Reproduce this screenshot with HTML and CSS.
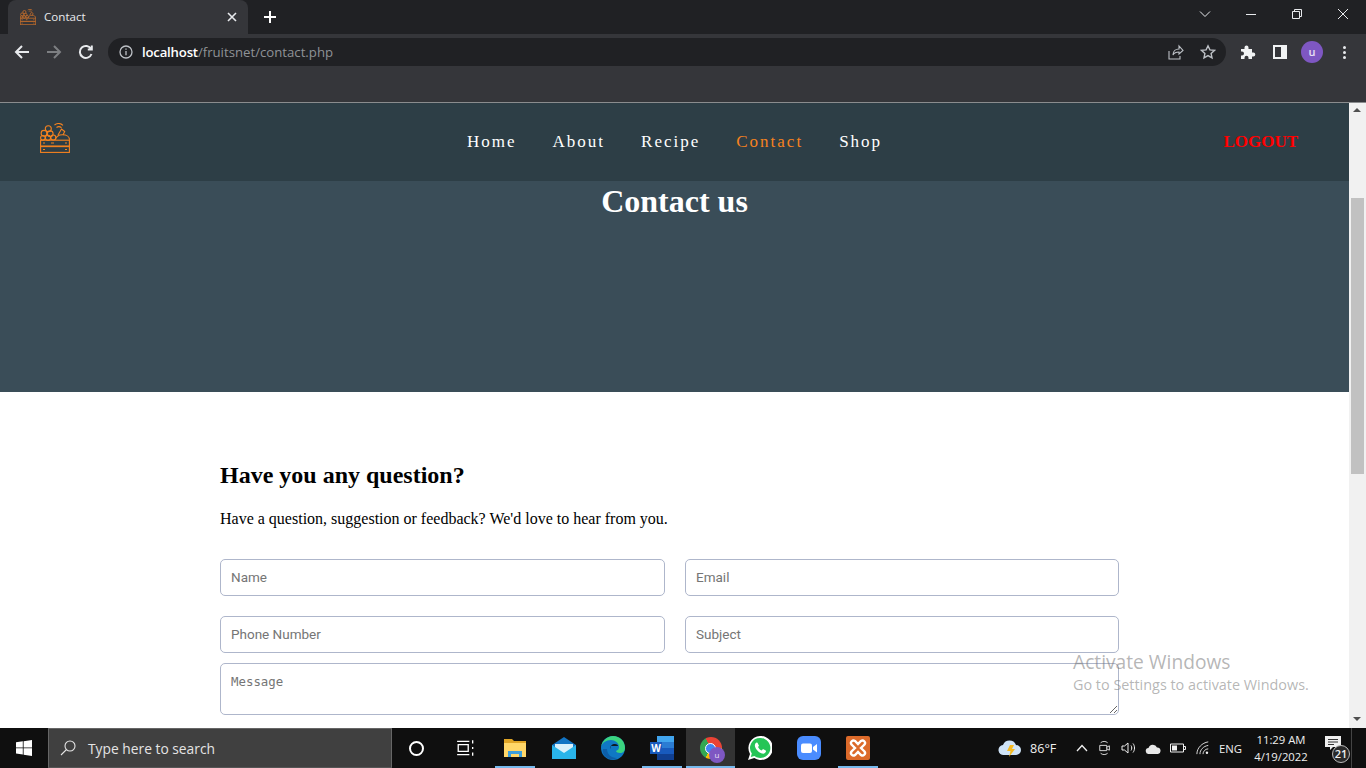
FILE: index.html
```html
<!DOCTYPE html>
<html lang="en">
<head>
<meta charset="utf-8">
<title>Contact</title>
<link rel="stylesheet" href="styles.css">
</head>
<body>
<svg class="defs" width="0" height="0" aria-hidden="true">
  <symbol id="crate" viewBox="0 0 30 30">
    <g fill="none" stroke="currentColor">
      <rect x="0.6" y="17.2" width="28.8" height="5.8"/>
      <rect x="0.6" y="23.6" width="28.8" height="5.8"/>
      <path d="M3 20h2M11 20h3M25 20h2M3 26.5h2M25 26.5h2"/>
      <circle cx="8.300" cy="5.800" r="3"/>
      <circle cx="4" cy="10.300" r="2.900"/>
      <circle cx="10.200" cy="10.800" r="2.900"/>
      <circle cx="2.900" cy="14.800" r="2.300"/>
      <circle cx="8" cy="14.800" r="2.600"/>
      <circle cx="13.300" cy="14.500" r="2.500"/>
      <path d="M15.500 16.800c0-3 3-5 7-5s7 2 7 5"/>
      <path d="M18 12l3.500-6 3.200 2.500-1.700 3.500"/>
      <path d="M14.500 2c2.500-1.800 6-1.800 8.500.3M16.500 4.500c1.500-1 3.500-1 5 .2"/>
    </g>
  </symbol>
</svg>

<header class="chrome">
  <div class="tabstrip">
    <div class="tab">
      <svg class="tab-icon"><use href="#crate"/></svg>
      <span class="tab-title">Contact</span>
      <svg class="tab-close" viewBox="0 0 10 10"><path d="M1 1l8 8M9 1l-8 8"/></svg>
    </div>
    <svg class="new-tab" viewBox="0 0 12 12"><path d="M6 0v12M0 6h12"/></svg>
    <div class="win-controls">
      <svg class="win-ico" viewBox="0 0 12 12"><path d="M1 3.500l5 5 5-5"/></svg>
      <svg class="win-ico" viewBox="0 0 12 12"><path d="M1 6.500h10"/></svg>
      <svg class="win-ico" viewBox="0 0 12 12"><path d="M1.500 3.500h7v7h-7zM3.500 3.500v-2h7v7h-2"/></svg>
      <svg class="win-ico" viewBox="0 0 12 12"><path d="M1 1l10 10M11 1l-10 10"/></svg>
    </div>
  </div>
  <div class="toolbar">
    <svg class="nav-ico" viewBox="0 0 16 16"><path d="M15 8H2M8 2L2 8l6 6"/></svg>
    <svg class="nav-ico dim" viewBox="0 0 16 16"><path d="M1 8h13M8 2l6 6-6 6"/></svg>
    <svg class="nav-ico" viewBox="0 0 16 16"><path d="M13.500 10a6 6 0 1 1-.4-5M13.800 1.500v4h-4"/></svg>
    <div class="omnibox">
      <svg class="info" viewBox="0 0 14 14"><circle cx="7" cy="7" r="6"/><path d="M7 6v4.200M7 3.500v1.300"/></svg>
      <span class="url"><span class="host">localhost</span>/fruitsnet/contact.php</span>
      <svg class="omni-ico share" viewBox="0 0 16 16"><path d="M1 7v8h11v-3M5 11c0-4 3-6 6-6V2l4 4.500L11 10V8c-3 0-5 1-6 3z"/></svg>
      <svg class="omni-ico star" viewBox="0 0 16 16"><path d="M8 1.800l1.900 4.100 4.500.5-3.300 3 .9 4.400L8 11.600l-4 2.200.9-4.400-3.300-3 4.500-.5z"/></svg>
    </div>
    <svg class="ext" viewBox="0 0 16 16"><path d="M1 5h3.500V3.500a2 2 0 0 1 4 0V5H12v3.500h1.300a2 2 0 0 1 0 4H12V15H8.500v-1.300a2 2 0 0 0-4 0V15H1v-3.500h1a2 2 0 0 0 0-4H1z"/></svg>
    <div class="sidepanel"><span class="sidepanel-gap"></span></div>
    <div class="avatar">u</div>
    <div class="kebab"><i></i><i></i><i></i></div>
  </div>
  <div class="bookmarks"></div>
</header>

<div class="viewport">
  <div class="page">
    <nav class="site-nav">
      <a class="logo" href="#"><svg class="logo-svg"><use href="#crate"/></svg></a>
      <ul class="links">
        <li><a href="#">Home</a></li>
        <li><a href="#">About</a></li>
        <li><a href="#">Recipe</a></li>
        <li><a href="#" class="active">Contact</a></li>
        <li><a href="#">Shop</a></li>
      </ul>
      <a class="logout" href="#">LOGOUT</a>
    </nav>
    <section class="hero"><h1>Contact us</h1></section>
    <section class="contact">
      <h2>Have you any question?</h2>
      <p>Have a question, suggestion or feedback? We'd love to hear from you.</p>
      <form class="form">
        <input type="text" placeholder="Name">
        <input type="text" placeholder="Email">
        <input type="text" placeholder="Phone Number">
        <input type="text" placeholder="Subject">
        <textarea placeholder="Message"></textarea>
      </form>
    </section>
  </div>
  <div class="scrollbar">
    <span class="arrow up"></span>
    <div class="track"><div class="thumb"></div></div>
    <span class="arrow down"></span>
  </div>
  <div class="watermark">
    <div class="wm-title">Activate Windows</div>
    <div class="wm-sub">Go to Settings to activate Windows.</div>
  </div>
</div>

<footer class="taskbar">
  <div class="start">
    <svg viewBox="0 0 16 16" class="win-logo"><path d="M0 2.300l6.800-1v6.200H0zM7.600 1.200L16 0v7.500H7.600zM0 8.300h6.800v6.300l-6.800-1zM7.600 8.300H16V16l-8.400-1.200z"/></svg>
  </div>
  <div class="search">
    <svg class="search-ico" viewBox="0 0 16 16"><circle cx="10" cy="6" r="5"/><path d="M6.500 9.500L1 15"/></svg>
    <span>Type here to search</span>
  </div>
  <div class="cell"><span class="cortana"></span></div>
  <div class="cell">
    <svg class="ticon" viewBox="0 0 18 18"><path class="line" d="M1 3h11M1 15h11M2 6h9v6H2zM15 2v3M15 8v2M15 13v3"/></svg>
  </div>
  <div class="cell open">
    <svg class="ticon" viewBox="0 0 22 20"><path fill="#e0a526" d="M0 1h8l2 2h12v16H0z"/><path fill="#ffd769" d="M0 5h22v14H0z"/><path fill="#3c9fdc" d="M4 13h14v6h-3v-3H7v3H4z"/></svg>
  </div>
  <div class="cell">
    <svg class="ticon big" viewBox="0 0 24 24"><path fill="#1274c4" d="M12 1L0 9v3h24V9z"/><path fill="#d9f0fb" d="M3 8h18v5l-9 5-9-5z"/><path fill="#29b4ea" d="M0 9l12 8 12-8v14H0z"/></svg>
  </div>
  <div class="cell">
    <svg class="ticon big" viewBox="0 0 24 24"><circle cx="12" cy="12" r="12" fill="#0f78c4"/><path fill="#3bd47f" d="M12 0c7 0 12 5 12 12 0 3-2 5-5 5-2 0-4-1-4-2 2-1 3-2 3-4 0-4-4-7-8-7-5 0-9 3-10 7C1 5 6 0 12 0z"/><path fill="#0f0f0f" d="M9 13c0-3 2-5 5-5 2 0 3 1 3 2H10z" opacity=".9"/><path fill="#0d5ea8" d="M6 13c0 5 4 9 10 9-3 2-8 2-11-1-3-2-4-6-3-8z"/></svg>
  </div>
  <div class="cell open">
    <svg class="ticon big" viewBox="0 0 24 24"><path fill="#2b7cd3" d="M7 0h17v24H7z"/><path fill="#41a5ee" d="M7 0h17v6H7z"/><path fill="#185abd" d="M7 12h17v6H7z"/><path fill="#103f91" d="M7 18h17v6H7z"/><rect x="0" y="6" width="12" height="12" fill="#185abd"/><text x="6" y="15.500" class="word-w">W</text></svg>
  </div>
  <div class="cell open active">
    <span class="chrome-logo"><span class="chrome-dot"></span></span>
    <span class="chrome-badge">u</span>
  </div>
  <div class="cell">
    <svg class="ticon big" viewBox="0 0 24 24"><path fill="#fff" d="M12 0a12 12 0 0 0-10 18L0 24l6.300-2A12 12 0 1 0 12 0z"/><path fill="#25c557" d="M12 2a10 10 0 0 0-8.200 15.600L2.800 21l3.600-1A10 10 0 1 0 12 2z"/><path fill="#fff" d="M8.500 6.500c-1 .5-2 2-1.500 4 .7 3 4 6 7 7 2 .5 3.500-.5 4-2l-.2-1-2.800-1.500-1.300 1.500c-1.500-.5-3-2-3.700-3.500l1-1.300L9.500 6.700z"/></svg>
  </div>
  <div class="cell">
    <svg class="ticon big" viewBox="0 0 24 24"><rect width="24" height="24" rx="6" fill="#4a8cff"/><rect x="4" y="7.500" width="11" height="9.500" rx="2" fill="#fff"/><path fill="#fff" d="M16 11l4-3v8.500l-4-3z"/></svg>
  </div>
  <div class="cell open">
    <svg class="ticon big" viewBox="0 0 24 24"><rect width="24" height="24" rx="2" fill="#dc6a2a"/><path fill="none" stroke="#fff" stroke-width="2.400" d="M9 12L5.500 8.500a2.500 2.500 0 0 1 3.500-3.500L12 8l3-3a2.500 2.500 0 0 1 3.500 3.500L15 12l3.500 3.500a2.500 2.500 0 0 1-3.500 3.500l-3-3-3 3a2.500 2.500 0 0 1-3.500-3.500z"/></svg>
  </div>

  <div class="tray">
    <svg class="weather" viewBox="0 0 24 18"><path fill="#cfe3f7" d="M6 16a5 5 0 0 1-1-10 7 7 0 0 1 13 0 5 5 0 0 1 0 10z"/><path fill="#f5b921" d="M12 6h4l-2 4h3l-6 8 1.500-6H9z"/></svg>
    <span class="temp">86°F</span>
    <svg class="tray-ico caret" viewBox="0 0 12 8"><path d="M1 7l5-5.500L11 7"/></svg>
    <svg class="tray-ico meet" viewBox="0 0 16 18"><path d="M3 3c2-2 6-2 8 0M3 15c2 2 6 2 8 0M2 6h8v6H2zM10 8l3-1.500v5L10 10"/></svg>
    <svg class="tray-ico sound" viewBox="0 0 16 16"><path d="M1 6v4h2.500L7 13V3L3.500 6zM10 5.500c1 1.500 1 3.500 0 5M12 3.500c2 2.500 2 6.500 0 9"/></svg>
    <svg class="tray-ico cloud" viewBox="0 0 16 11"><path fill="#e8e8e8" stroke="none" d="M4 11a3 3 0 0 1-.5-6 4.500 4.500 0 0 1 8.500-.5A3.300 3.300 0 0 1 13 11z"/></svg>
    <svg class="tray-ico battery" viewBox="0 0 16 10"><path d="M.5 1h13v8H.5zM14 3.500h1.500v3H14"/><rect class="fill" x="2" y="2.500" width="5" height="5"/></svg>
    <svg class="tray-ico wifi" viewBox="0 0 16 16"><path d="M1 15C1 8 7 2 14 1M4.500 15c0-5 4-9 9.500-10M8 15c0-3 2.500-6 6-6"/><circle class="fill" cx="12.500" cy="13.500" r="1.400"/></svg>
    <span class="lang">ENG</span>
    <div class="clock"><span>11:29 AM</span><span>4/19/2022</span></div>
    <div class="notif">
      <svg class="notif-ico" viewBox="0 0 16 14"><path d="M0 0h16v11H8l-3 3v-3H0z"/><path class="notif-lines" d="M3 3.500h10M3 6h10M3 8.500h6"/></svg>
      <span class="notif-badge">21</span>
    </div>
    <div class="show-desktop"></div>
  </div>
</footer>
</body>
</html>
```
FILE: styles.css
```css
* { box-sizing: border-box; }
html, body { margin: 0; height: 100%; overflow: hidden; }
body { display: flex; flex-direction: column; width: 1366px; height: 768px; font-family: "Liberation Serif", serif; background: #fff; }
.defs { position: absolute; }
svg { display: block; }

/* Browser frame */
.chrome { background: #35363a; color: #fff; border-bottom: 1px solid #8a8c8e; height: 103px; flex: none; font-family: "Open Sans", sans-serif; }
.tabstrip { display: flex; align-items: center; height: 34px; background: #202124; padding-left: 8px; }
.tab { display: flex; align-items: center; width: 240px; height: 34px; background: #35363a; border-radius: 8px 8px 0 0; padding: 0 10px 0 12px; }
.tab-icon { width: 16px; height: 16px; color: #b5682c; stroke-width: 1.700; }
.tab-title { flex: 1; margin: -2px 0 0 8px; font-size: 11.600px; color: #e8eaed; }
.tab-close { width: 10px; height: 10px; fill: none; stroke: #e8eaed; stroke-width: 1.600; margin-right: 1px; }
.new-tab { width: 12px; height: 12px; margin-left: 16px; fill: none; stroke: #fff; stroke-width: 2; }
.win-controls { display: flex; margin: -6px 0 0 auto; align-items: center; }
.win-ico { width: 12px; height: 12px; margin: 0 17px; fill: none; stroke: #e8eaed; stroke-width: 1; }

.toolbar { display: flex; align-items: center; height: 36px; padding-left: 14px; }
.nav-ico { width: 16px; height: 16px; margin-right: 16px; fill: none; stroke: #e8eaed; stroke-width: 2; }
.nav-ico.dim { stroke: #7d7f82; }
.nav-ico:nth-child(3) { margin-right: 14px; }
.omnibox { display: flex; align-items: center; width: 1118px; height: 28px; border-radius: 14px; background: #202124; padding: 0 10px 0 11px; }
.info { width: 14px; height: 14px; fill: none; stroke: #bdc1c6; stroke-width: 1.300; }
.url { margin: -1px 0 0 9px; font-size: 13.200px; color: #8f9296; }
.host { color: #fff; font-weight: 600; letter-spacing: -.2px; }
.omni-ico { width: 16px; height: 16px; fill: none; stroke: #bdc1c6; stroke-width: 1.100; }
.share { margin-left: auto; margin-right: 16px; }
.star { stroke-width: 1.400; }
.ext { width: 16px; height: 16px; fill: #f1f3f4; margin-left: 14px; }
.sidepanel { width: 14px; height: 14px; background: #f1f3f4; margin-left: 17px; padding: 2px 6px 2px 2px; }
.sidepanel-gap { display: block; height: 100%; background: #35363a; }
.avatar { width: 22px; height: 22px; margin-left: 14px; border-radius: 50%; background: #7e57c2; color: #e8e0f5; font: 600 11px/21px "Open Sans", sans-serif; text-align: center; }
.kebab { display: flex; flex-direction: column; gap: 2px; margin-left: 20px; }
.kebab i { width: 3px; height: 3px; border-radius: 50%; background: #e8eaed; }
.bookmarks { height: 32px; }

/* Page */
.viewport { position: relative; display: flex; flex: 1; min-height: 0; overflow: hidden; }
.page { flex: 1; min-width: 0; overflow: hidden; }
.site-nav { display: flex; align-items: center; height: 78px; background: #2d3e46; padding: 0 51px 0 40px; }
.logo { display: block; width: 427px; height: 30px; margin-top: -8px; color: #f5821f; }
.logo-svg { width: 30px; height: 30px; stroke-width: 1.100; }
.links { display: flex; gap: 36px; list-style: none; margin: 0; padding: 0; }
.links a { font-size: 17px; letter-spacing: 2px; color: #fff; text-decoration: none; }
.links a.active { color: #f5821f; }
.logout { margin-left: auto; font-size: 17px; font-weight: 700; color: #f00; text-decoration: none; }
.hero { height: 211px; background: #3a4d58; text-align: center; }
.hero h1 { margin: 0; padding-top: 2px; font-size: 32px; line-height: 37px; color: #fff; }
.contact { padding: 69px 230px 0 220px; }
.contact h2 { margin: 0; font-size: 24px; line-height: 28px; color: #000; }
.contact p { margin: 21px 0 0; font-size: 16px; line-height: 18px; color: #000; }
.form { display: grid; grid-template-columns: 445px 434px; column-gap: 20px; margin-top: 31px; }
.form input, .form textarea { border: 1px solid #aeb6cb; border-radius: 5px; background: #fff; padding: 0 10px; outline: none; }
.form input { height: 37px; padding-bottom: 2px; font: 13.500px Roboto, sans-serif; margin-bottom: 20px; }
.form input:nth-of-type(n+3) { margin-bottom: 10px; }
.form textarea { grid-column: 1 / -1; height: 52px; padding: 10px; font: 12.400px "DejaVu Sans Mono", monospace; }
.form ::placeholder { color: #757575; }

.scrollbar { flex: none; display: flex; flex-direction: column; width: 17px; background: #f1f1f1; }
.arrow { display: block; flex: none; height: 17px; position: relative; }
.arrow::after { content: ""; position: absolute; left: 4px; border: 4px solid transparent; }
.arrow.up::after { top: 1px; border-bottom-color: #505050; }
.arrow.down::after { top: 6px; border-top-color: #505050; }
.track { flex: 1; padding: 78px 2px 0; }
.thumb { height: 276px; background: #c1c1c1; }

.watermark { position: absolute; left: 1073px; top: 545px; color: rgba(120,120,120,.55); font-family: "Open Sans", sans-serif; pointer-events: none; }
.wm-title { font-size: 19.200px; line-height: 27px; }
.wm-sub { font-size: 14.400px; line-height: 20px; }

/* Taskbar */
.taskbar { display: flex; flex: none; height: 40px; background: #0f0f0f; color: #fff; font-family: "Open Sans", sans-serif; }
.start { display: flex; align-items: center; justify-content: center; width: 48px; }
.win-logo { width: 16px; height: 16px; fill: #fff; }
.search { display: flex; align-items: center; width: 344px; background: #404040; border: 1px solid #666; border-bottom-color: #555; padding-left: 11px; font-size: 13.800px; color: #e4e4e4; }
.search-ico { width: 16px; height: 16px; margin-right: 12px; fill: none; stroke: #e4e4e4; stroke-width: 1.100; }
.cell { position: relative; display: flex; align-items: center; justify-content: center; width: 49px; height: 40px; }
.cell.open::after { content: ""; position: absolute; left: 5px; right: 4px; bottom: 0; height: 2px; background: #76b9ed; }
.cell.active { background: #333; }
.cell.active::after { left: 0; right: 0; }
.cortana { width: 15px; height: 15px; border-radius: 50%; border: 2px solid #fff; }
.ticon { width: 22px; height: 20px; }
.ticon.big { width: 24px; height: 24px; }
.line { fill: none; stroke: #fff; stroke-width: 1.200; }
.word-w { fill: #fff; font: 700 10px "Open Sans", sans-serif; text-anchor: middle; }
.chrome-logo { display: flex; align-items: center; justify-content: center; width: 22px; height: 22px; border-radius: 50%; background: conic-gradient(from 330deg, #ea4335 0 120deg, #fbbc04 120deg 240deg, #34a853 240deg); }
.chrome-dot { width: 11px; height: 11px; border-radius: 50%; background: #4285f4; border: 1.500px solid #fff; }
.chrome-badge { position: absolute; left: 23px; top: 19px; width: 16px; height: 16px; border-radius: 50%; background: #7e57c2; color: #e8e0f5; font-size: 8px; line-height: 15px; text-align: center; }

.tray { display: flex; align-items: center; margin-left: auto; font-size: 11.300px; color: #f0f0f0; }
.weather { width: 24px; height: 18px; margin-right: 8px; }
.temp { width: 36px; font-size: 12.600px; }
.tray-ico { flex: none; fill: none; stroke: #f0f0f0; stroke-width: 1; }
.tray-ico .fill { fill: #f0f0f0; stroke: none; }
.caret { width: 12px; height: 8px; margin-left: 10px; stroke-width: 1.300; }
.meet { width: 14px; height: 16px; margin-left: 10px; }
.sound { width: 16px; height: 16px; margin-left: 9px; }
.cloud { width: 16px; height: 11px; margin-left: 8px; }
.battery { width: 16px; height: 10px; margin-left: 9px; }
.wifi { width: 14px; height: 14px; margin-left: 10px; }
.lang { margin-left: 9px; width: 24px; }
.clock { display: flex; flex-direction: column; align-items: center; width: 68px; margin-left: 4px; line-height: 17px; }
.notif { position: relative; width: 26px; height: 32px; margin-left: 10px; }
.notif-ico { position: absolute; left: 0; top: 4px; width: 16px; height: 14px; fill: #f0f0f0; }
.notif-lines { fill: none; stroke: #333; stroke-width: 1; }
.notif-badge { position: absolute; left: 7px; top: 13px; width: 18px; height: 18px; border-radius: 50%; background: #2a2a2a; border: 1px solid #bbb; font-size: 11px; font-weight: 600; line-height: 16px; text-align: center; }
.show-desktop { width: 15px; height: 40px; border-left: 1px solid #444; }
```
